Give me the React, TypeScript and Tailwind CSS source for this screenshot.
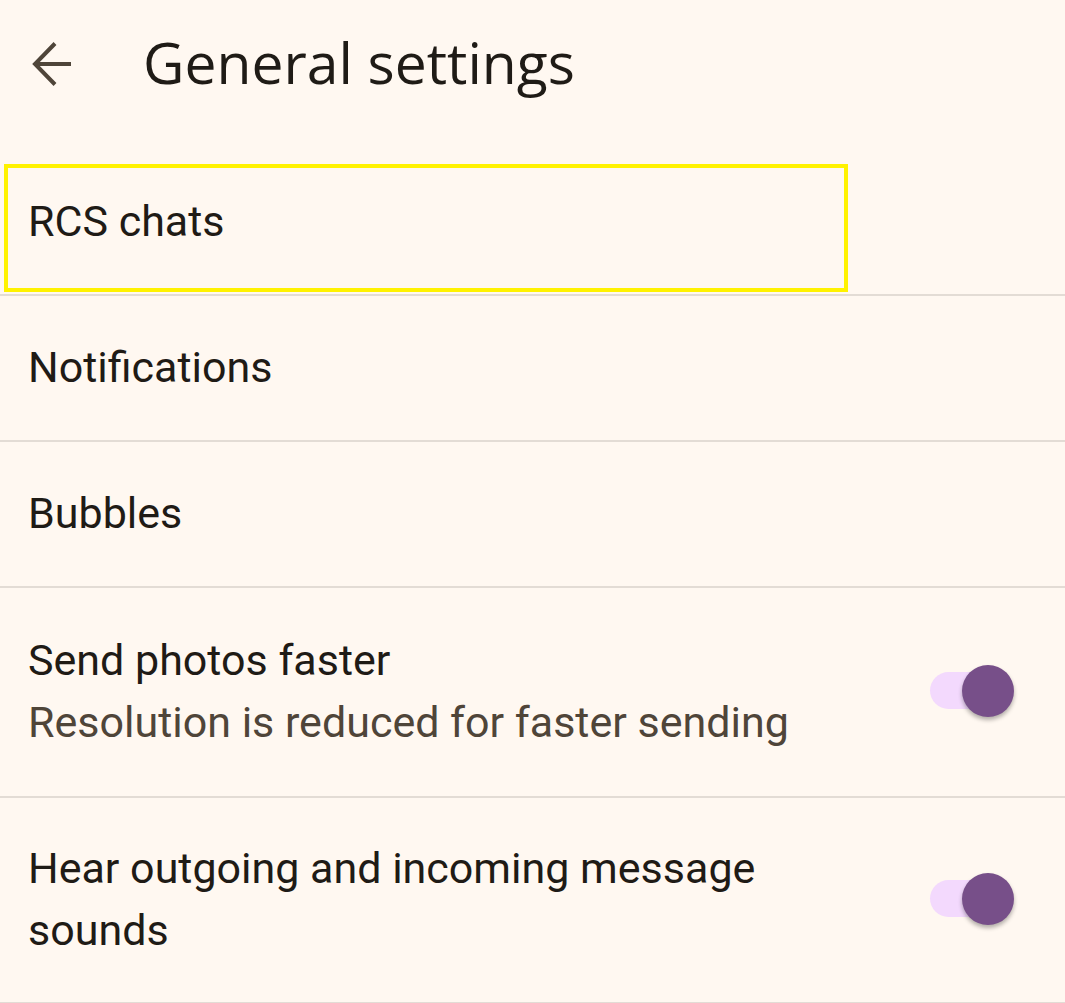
function BackArrow() {
  return (
    <svg width="44" height="48" viewBox="0 0 44 48" fill="none" className="text-[#4f4539]">
      <path d="M23 3.5L3 24L23 44.5M3 24H39" stroke="currentColor" strokeWidth="4" strokeLinecap="butt" strokeLinejoin="miter" />
    </svg>
  );
}

function Toggle() {
  return (
    <div className="relative w-[84px] h-[52px] -mt-[3px] flex items-center shrink-0">
      <div className="absolute left-0 right-[12px] h-[37px] rounded-full bg-[#f3d9fd]" />
      <div className="absolute right-0 w-[52px] h-[52px] rounded-full bg-[#774f89] shadow-[0_3px_4px_rgba(0,0,0,0.3)]" />
    </div>
  );
}

function Row({
  title,
  sub,
  toggle,
  h,
  highlight,
}: {
  title: string;
  sub?: string;
  toggle?: boolean;
  h: string;
  highlight?: boolean;
}) {
  return (
    <div className={`relative flex items-center pl-[28px] pr-[51px] border-b-2 border-[#e3dcd5] ${h}`}>
      {highlight && (
        <div className="absolute left-[4px] top-[14px] w-[844px] h-[128px] border-4 border-[#fff200] pointer-events-none" />
      )}
      <div className="flex-1 min-w-0 -mt-[3px]">
        <div className="max-w-[850px] text-[43px] leading-[62px] text-[#1f1b16]">{title}</div>
        {sub && <div className="text-[43px] leading-[62px] text-[#4f4539]">{sub}</div>}
      </div>
      {toggle && <Toggle />}
    </div>
  );
}

export default function App() {
  return (
    <div className="min-h-screen w-full bg-[#fff8f1] font-['Roboto',sans-serif] overflow-hidden">
      <div className="h-[150px] flex items-start pt-[28px]">
        <div className="w-[143px] flex pl-[32px] pt-[12px]">
          <BackArrow />
        </div>
        <h1 className="text-[57px] leading-[68px] text-[#1f1b16] font-['Open_Sans',sans-serif]">General settings</h1>
      </div>
      <Row title="RCS chats" h="h-[146px]" highlight />
      <Row title="Notifications" h="h-[146px]" />
      <Row title="Bubbles" h="h-[146px]" />
      <Row title="Send photos faster" sub="Resolution is reduced for faster sending" toggle h="h-[210px]" />
      <Row title="Hear outgoing and incoming message sounds" toggle h="h-[206px]" />
    </div>
  );
}
